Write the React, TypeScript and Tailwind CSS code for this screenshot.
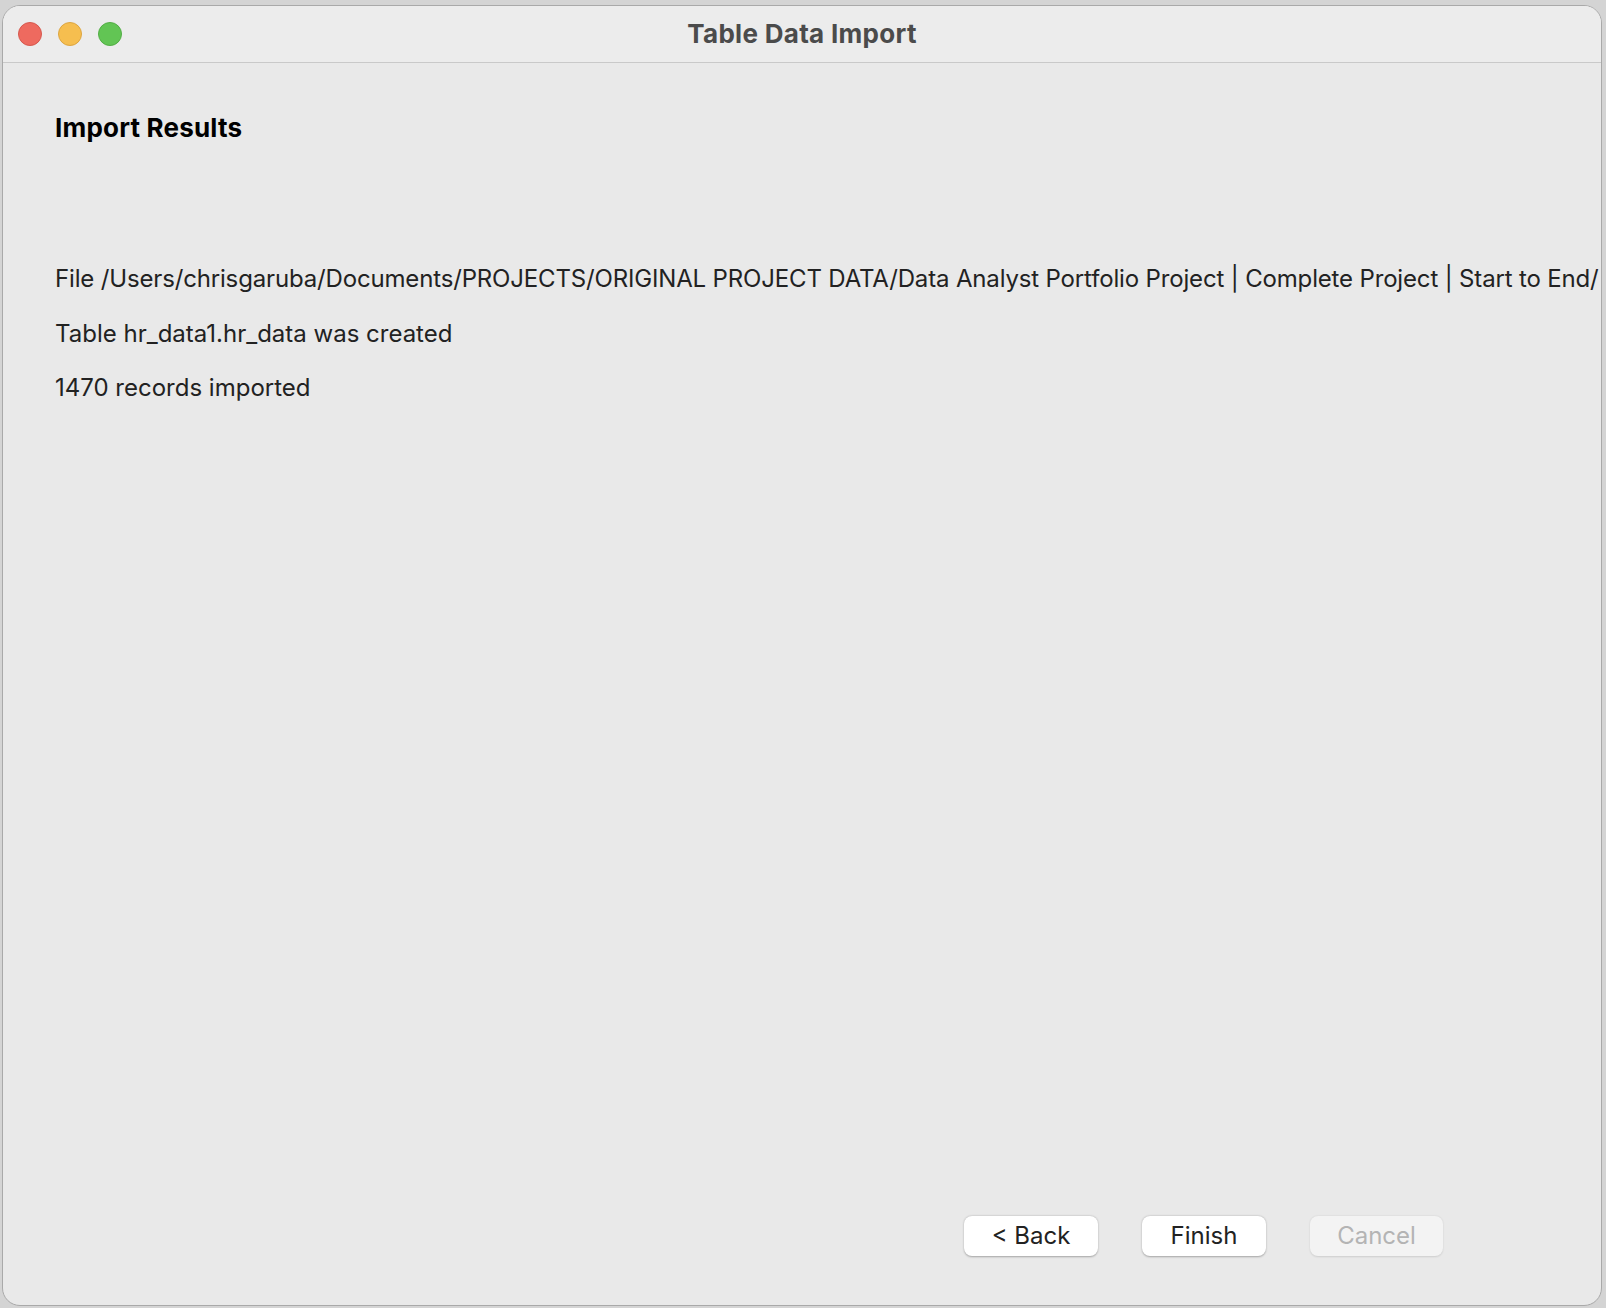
export default function App() {
  const font = { fontFamily: "Inter, 'Noto Sans', sans-serif" };

  return (
    <div
      className="w-[1606px] h-[1308px] bg-[#d4d4d4] pt-[5px] pl-[2px] pr-[4px] pb-[2px]"
      style={font}
    >
      <div className="h-full flex flex-col rounded-[18px] overflow-hidden border border-[#a9a9a9] bg-[#e9e9e9]">
        {/* title bar */}
        <div className="relative h-[57px] shrink-0 flex items-center bg-[#ececec] border-b border-[#c9c9c9]">
          <div className="flex items-center gap-4 pl-[15px]">
            <span className="w-6 h-6 rounded-full bg-[#ee6a5f] border border-[#d5584e]" />
            <span className="w-6 h-6 rounded-full bg-[#f6be4f] border border-[#dca541]" />
            <span className="w-6 h-6 rounded-full bg-[#62c554] border border-[#52ad45]" />
          </div>
          <div className="absolute inset-0 flex items-center justify-center pb-[2px] pointer-events-none">
            <span className="text-[26px] font-bold text-[#4b4b4b] tracking-[0.3px]">Table Data Import</span>
          </div>
        </div>

        {/* content */}
        <div className="flex-1 flex flex-col pl-[52px] pt-[50px]">
          <h1 className="text-[26px] leading-[30px] font-bold text-black tracking-[0.2px]">Import Results</h1>
          <div className="mt-[109px] flex flex-col text-[24px] leading-[54.5px] text-[#222222]">
            <p className="whitespace-nowrap tracking-[-0.16px]">
              File /Users/chrisgaruba/Documents/PROJECTS/ORIGINAL PROJECT DATA/Data Analyst Portfolio Project | Complete Project | Start to End/
            </p>
            <p className="whitespace-nowrap">Table hr_data1.hr_data was created</p>
            <p className="whitespace-nowrap">1470 records imported</p>
          </div>
        </div>

        {/* buttons */}
        <div className="shrink-0 flex justify-end gap-[44px] pr-[158px] pb-[49px]">
          <button className="w-[134px] h-10 rounded-[8px] bg-white text-[24px] text-[#222222] shadow-[0_0.5px_2px_rgba(0,0,0,0.3)]">
            &lt; Back
          </button>
          <button className="w-[124px] h-10 rounded-[8px] bg-white text-[24px] text-[#222222] shadow-[0_0.5px_2px_rgba(0,0,0,0.3)]">
            Finish
          </button>
          <button className="w-[133px] h-10 rounded-[8px] bg-[#f3f3f3] text-[24px] text-[#b4b4b4] shadow-[0_0.5px_2px_rgba(0,0,0,0.12)]">
            Cancel
          </button>
        </div>
      </div>
    </div>
  );
}
